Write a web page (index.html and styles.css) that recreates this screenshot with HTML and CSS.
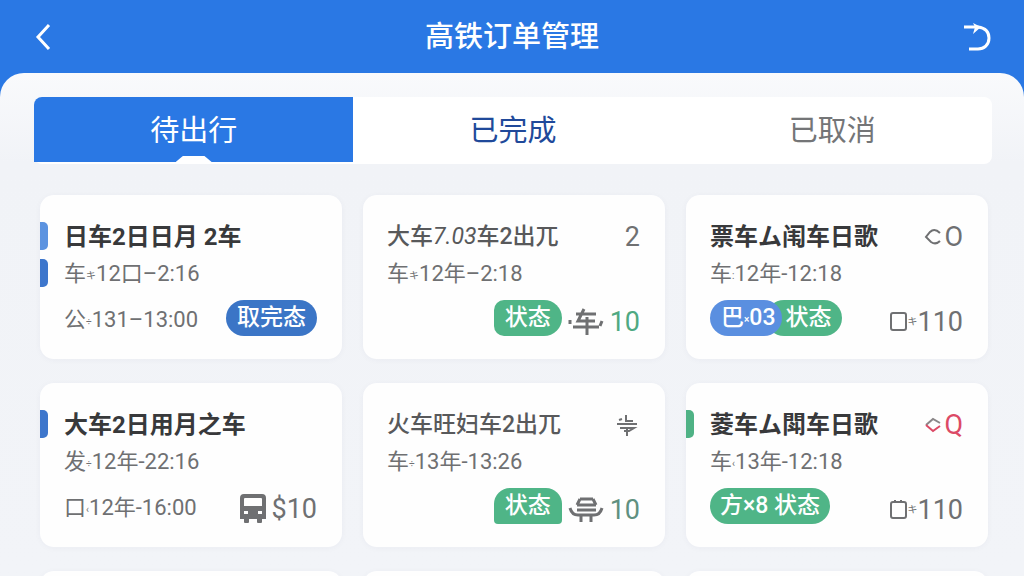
FILE: index.html
```html
<!DOCTYPE html>
<html lang="zh-CN">
<head>
  <meta charset="UTF-8">
  <meta name="viewport" content="width=device-width, initial-scale=1.0">
  <title>高铁订单管理</title>
  <link rel="stylesheet" href="styles.css">
</head>
<body>
  <header class="topbar">
    <button class="icon-btn" type="button" aria-label="返回">
      <svg width="16" height="28" viewBox="0 0 16 28"><path d="M14 2 L3 14 L14 26"/></svg>
    </button>
    <h1>高铁订单管理</h1>
    <button class="icon-btn" type="button" aria-label="刷新">
      <svg width="28" height="28" viewBox="0 0 28 28"><path d="M0 4 H14 C21 5 25 9 25 15 C25 22 20 26 14 26 H5"/><path class="fill" d="M9 0 L17 4 L9 11 L11 4 Z"/></svg>
    </button>
  </header>

  <main class="sheet">
    <nav class="tabs">
      <button class="tab active" type="button">待出行</button>
      <button class="tab done" type="button">已完成</button>
      <button class="tab" type="button">已取消</button>
    </nav>

    <section class="orders">
      <article class="card">
        <div class="marks"><i class="mark light"></i><i class="mark"></i></div>
        <div class="content">
          <div class="row"><h2>日车2日日月 2车</h2></div>
          <p class="line">车<small>キ</small>12口–2:16</p>
          <div class="foot">
            <span class="time">公<small>÷</small>131–13:00</span>
            <span class="pill blue">取完态</span>
          </div>
        </div>
      </article>

      <article class="card">
        <div class="marks"></div>
        <div class="content">
          <div class="row"><h2 class="thin">大车<em>7.03</em>车2出兀</h2><span class="num">2</span></div>
          <p class="line">车<small>キ</small>12年–2:18</p>
          <div class="foot end">
            <span class="pill green soft">状态</span>
            <svg class="vehicle" width="36" height="28" viewBox="0 0 36 28"><path d="M8 6 H28 M16 1 L10 13 H27 M5 19 H31 M19 9 V27"/><path d="M2 12 V16 M34 13 L32 18"/></svg>
            <span class="num price">10</span>
          </div>
        </div>
      </article>

      <article class="card">
        <div class="marks"></div>
        <div class="content">
          <div class="row">
            <h2>票车ム闱车日歌</h2>
            <span class="num state"><svg width="18" height="18" viewBox="0 0 18 18"><path d="M16 5 C12 1 9 1 6 4 L2 9 L7 14 C10 16 13 16 16 13"/></svg>O</span>
          </div>
          <p class="line">车<small>:</small>12年-12:18</p>
          <div class="foot">
            <span class="pills"><span class="pill sky">巴<small>×</small>03</span><span class="pill green tail">状态</span></span>
            <span class="num ticket"><svg width="17" height="20" viewBox="0 0 17 20"><rect x="1" y="1" width="15" height="17" rx="2"/></svg><small>キ</small>110</span>
          </div>
        </div>
      </article>

      <article class="card">
        <div class="marks"><i class="mark"></i></div>
        <div class="content">
          <div class="row"><h2>大车2日用月之车</h2></div>
          <p class="line">发<small>÷</small>12年-22:16</p>
          <div class="foot">
            <span class="time">口<small>‹</small>12年-16:00</span>
            <span class="num fare">
              <svg class="bus" width="26" height="30" viewBox="0 0 26 30"><path fill-rule="evenodd" d="M4 0 H22 Q26 0 26 4 V25 H22 V28 Q22 29 21 29 H18 Q17 29 17 28 V25 H9 V28 Q9 29 8 29 H5 Q4 29 4 28 V25 H0 V4 Q0 0 4 0 Z M5 4 Q4 4 4 5 V12 H22 V5 Q22 4 21 4 Z M4 17 V20 H8 V17 Z M18 17 V20 H22 V17 Z"/></svg>$10
            </span>
          </div>
        </div>
      </article>

      <article class="card">
        <div class="marks"></div>
        <div class="content">
          <div class="row">
            <h2 class="thin">火车旺妇车2出兀</h2>
            <svg class="signal" width="22" height="24" viewBox="0 0 22 24"><path d="M1 11 H21 M3 7 L6 6 M10 2 V8 H17 M4 15 H18 L13 18 H8 M11 16 V23"/></svg>
          </div>
          <p class="line">车<small>÷</small>13年-13:26</p>
          <div class="foot end">
            <span class="pill green arch">状态</span>
            <svg class="vehicle" width="36" height="28" viewBox="0 0 36 28"><path d="M12 3 H25 M9 9 H28 M12 3 L9 9 M25 3 L28 9 M9 14 H28 M2 12 Q4 19 10 19 H26 Q32 19 34 12 M13 19 V26 M23 19 V26"/></svg>
            <span class="num price dark">10</span>
          </div>
        </div>
      </article>

      <article class="card">
        <div class="marks"><i class="mark mint"></i></div>
        <div class="content">
          <div class="row">
            <h2>菱车ム閗车日歌</h2>
            <span class="num state red"><svg width="18" height="18" viewBox="0 0 18 18"><path class="gray" d="M2 9 L9 3 L16 7"/><path d="M2 9 L9 15 L16 10"/></svg>Q</span>
          </div>
          <p class="line">车<small>‹</small>13年-12:18</p>
          <div class="foot">
            <span class="pill green wide">方×8 状态</span>
            <span class="num ticket"><svg width="17" height="20" viewBox="0 0 17 20"><rect x="1" y="2" width="15" height="16" rx="2"/><path d="M5 0 V3 M11 0 V3"/></svg><small>キ</small>110</span>
          </div>
        </div>
      </article>

      <article class="card"></article>
      <article class="card"></article>
      <article class="card"></article>
    </section>
  </main>
</body>
</html>
```

FILE: styles.css
```css
* {
  box-sizing: border-box;
}

body {
  margin: 0;
  height: 100vh;
  overflow: hidden;
  display: flex;
  flex-direction: column;
  background-color: #2a78e4;
  color: #6f7072;
  font-family: Roboto, "Noto Sans CJK SC", sans-serif;
}

h1, h2, p {
  margin: 0;
}

button {
  border: 0;
  padding: 0;
  background: none;
  font-family: inherit;
  cursor: pointer;
}

svg {
  fill: none;
  stroke: currentColor;
  stroke-width: 2;
  flex: none;
}

/* top bar */
.topbar {
  display: flex;
  align-items: center;
  justify-content: space-between;
  height: 73px;
  flex: none;
  padding: 0 32px;
  color: #fff;
}

.topbar h1 {
  font-size: 29px;
  font-weight: 500;
  line-height: 40px;
}

.icon-btn {
  display: flex;
  width: 28px;
  padding-left: 3px;
  color: #fff;
}

.icon-btn:last-child {
  padding-left: 0;
}

.icon-btn svg {
  stroke-width: 3;
}

.icon-btn .fill {
  fill: currentColor;
  stroke: none;
}

.sheet {
  flex: 1;
  min-height: 0;
  overflow: hidden;
  padding: 24px 32px 0 34px;
  border-radius: 24px 24px 0 0;
  background: linear-gradient(#f9fafc, #f1f3f7 90px, #f2f4f8);
}

/* tabs */
.tabs {
  display: grid;
  grid-template-columns: repeat(3, 1fr);
  align-items: start;
  height: 67px;
  border-radius: 8px;
  background-color: #fff;
}

.tab {
  height: 65px;
  padding-bottom: 4px;
  color: #747577;
  font-size: 29px;
}

.tab.done {
  color: #20499a;
}

.tab.active {
  position: relative;
  border-radius: 8px 0 0 0;
  background-color: #2a78e4;
  color: #fff;
}

.tab.active::after {
  content: "";
  position: absolute;
  left: 50%;
  bottom: 0;
  width: 36px;
  height: 6px;
  margin-left: -18px;
  background-color: #fff;
  clip-path: polygon(0 100%, 20% 0, 80% 0, 100% 100%);
}

/* order cards */
.orders {
  display: grid;
  grid-template-columns: repeat(3, 1fr);
  gap: 24px 21px;
  padding: 31px 4px 0 6px;
}

.card {
  display: flex;
  min-height: 163px;
  border-radius: 14px;
  background-color: #fefefe;
  box-shadow: 0 1px 6px rgba(40, 60, 100, 0.04);
}

.marks {
  display: flex;
  flex-direction: column;
  gap: 9px;
  width: 24px;
  flex: none;
  padding-top: 27px;
}

.mark {
  width: 8px;
  height: 28px;
  border-radius: 0 5px 5px 0;
  background-color: #3d76cc;
}

.mark.light {
  background-color: #5c93e0;
}

.mark.mint {
  background-color: #4fb285;
}

.content {
  flex: 1;
  min-width: 0;
  padding: 25px 25px 23px 0;
}

.row {
  display: flex;
  align-items: center;
  justify-content: space-between;
  height: 34px;
}

.row h2 {
  color: #38393b;
  font-size: 24px;
  font-weight: 700;
  line-height: 34px;
  white-space: nowrap;
}

.row h2.thin {
  color: #58595b;
  font-size: 23px;
  font-weight: 500;
}

.row h2 em {
  font-weight: 400;
}

.line, .time {
  font-size: 22px;
  white-space: nowrap;
}

.line {
  line-height: 40px;
}

.line small, .time small, .num small, .pill small {
  font-size: 10px;
  vertical-align: 2px;
}

.foot {
  display: flex;
  align-items: flex-end;
  justify-content: space-between;
  height: 36px;
  margin-top: 4px;
}

.foot.end {
  justify-content: flex-end;
  gap: 6px;
}

.time, .num {
  line-height: 28px;
}

.num {
  display: flex;
  align-items: center;
  font-size: 27px;
}

.price {
  color: #4fa982;
}

.price.dark {
  color: #5f9080;
}

.fare {
  gap: 5px;
}

.bus {
  fill: currentColor;
  stroke: none;
}

.vehicle {
  stroke-width: 3;
}

.signal {
  margin-right: 2px;
}

.state {
  gap: 2px;
}

.state.red {
  color: #dc4a66;
}

.state .gray {
  stroke: #8a8688;
}

/* status pills */
.pills {
  display: flex;
}

.pill {
  height: 36px;
  padding: 0 11px;
  border-radius: 18px;
  color: #fff;
  font-size: 23px;
  font-weight: 500;
  line-height: 36px;
  white-space: nowrap;
}

.blue {
  background-color: #3b75c6;
}

.sky {
  position: relative;
  z-index: 1;
  padding-right: 7px;
  background-color: #5a8fe0;
}

.green {
  background-color: #4fb587;
}

.tail {
  margin-left: -16px;
  padding-left: 19px;
}

.soft {
  border-radius: 10px 18px 18px 10px;
}

.arch {
  border-radius: 16px 16px 4px 4px;
}

.wide {
  padding: 0 10px;
}
```
